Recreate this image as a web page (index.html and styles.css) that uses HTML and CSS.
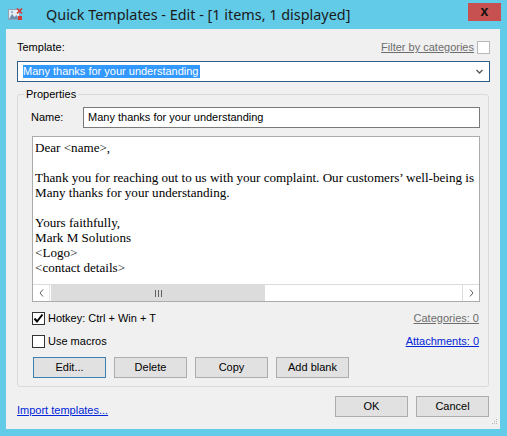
FILE: index.html
```html
<!DOCTYPE html>
<html>
<head>
<meta charset="utf-8">
<link rel="stylesheet" href="styles.css">
</head>
<body>
<div class="window">
  <div class="titlebar">
    <svg class="app-icon" width="15" height="13" viewBox="0 0 15 13">
      <rect x="0.5" y="1.5" width="11" height="10" fill="#e8eef4" stroke="#8fa3b8"/>
      <path d="M1 11 L4 6 L6.5 9 L8.5 7 L11 11 Z" fill="#6f8fb0"/>
      <circle cx="4" cy="4" r="1.3" fill="#9fb7cf"/>
      <path d="M9 0.5 L14 5.5 M14 0.5 L9 5.5" stroke="#d23a3a" stroke-width="1.6"/>
      <rect x="10" y="8" width="4" height="4" fill="#d23a3a"/>
    </svg>
    <span class="title">Quick Templates - Edit - [1 items, 1 displayed]</span>
    <div class="close">x</div>
  </div>
  <div class="client">
    <div class="top-row">
      <span>Template:</span>
      <span class="filter"><span class="link-gray">Filter by categories</span><span class="cb cb-light"></span></span>
    </div>
    <div class="combo">
      <span class="sel">Many thanks for your understanding</span>
      <svg class="combo-arrow" width="7" height="5" viewBox="0 0 7 5"><path d="M0.5 1 L3.5 4 L6.5 1" fill="none" stroke="#5a5a5a" stroke-width="1.4"/></svg>
    </div>
    <fieldset class="group">
      <legend>Properties</legend>
      <div class="name-row">
        <span class="name-label">Name:</span>
        <div class="input">Many thanks for your understanding</div>
      </div>
      <div class="editor">
        <div class="editor-text">Dear &lt;name&gt;,

Thank you for reaching out to us with your complaint. Our customers’ well-being is
Many thanks for your understanding.

Yours faithfully,
Mark M Solutions
&lt;Logo&gt;
&lt;contact details&gt;</div>
        <div class="sb">
          <div class="sb-btn sb-left"><svg width="5" height="8" viewBox="0 0 5 8"><path d="M4 0.5 L1 4 L4 7.5" fill="none" stroke="#606060" stroke-width="1"/></svg></div>
          <div class="sb-thumb"><svg width="7" height="7" viewBox="0 0 7 7"><path d="M0.5 0 V7 M3.5 0 V7 M6.5 0 V7" stroke="#606060" stroke-width="1"/></svg></div>
          <div class="sb-track"></div>
          <div class="sb-btn sb-right"><svg width="5" height="8" viewBox="0 0 5 8"><path d="M1 0.5 L4 4 L1 7.5" fill="none" stroke="#606060" stroke-width="1"/></svg></div>
        </div>
      </div>
      <div class="opt-row">
        <span class="check"><span class="cb cb-checked"><svg width="11" height="11" viewBox="0 0 11 11"><path d="M1.5 5.5 L4 8.5 L9.5 1.5" fill="none" stroke="#000" stroke-width="2"/></svg></span>Hotkey: Ctrl + Win + T</span>
        <span class="link-gray">Categories: 0</span>
      </div>
      <div class="opt-row">
        <span class="check"><span class="cb"></span>Use macros</span>
        <span class="link-blue">Attachments: 0</span>
      </div>
      <div class="btn-row">
        <button class="btn btn-default">Edit...</button>
        <button class="btn">Delete</button>
        <button class="btn">Copy</button>
        <button class="btn">Add blank</button>
      </div>
    </fieldset>
    <div class="footer">
      <span class="link-blue">Import templates...</span>
      <div class="footer-btns">
        <button class="btn">OK</button>
        <button class="btn">Cancel</button>
      </div>
    </div>
    <svg class="grip" width="6" height="7" viewBox="0 0 6 7">
      <rect x="4" y="0" width="1" height="1" fill="#b5b5b5"/>
      <rect x="2" y="2" width="1" height="1" fill="#b5b5b5"/>
      <rect x="4" y="2" width="1" height="1" fill="#b5b5b5"/>
      <rect x="0" y="4" width="1" height="1" fill="#b5b5b5"/>
      <rect x="2" y="4" width="1" height="1" fill="#b5b5b5"/>
      <rect x="4" y="4" width="1" height="1" fill="#b5b5b5"/>
    </svg>
  </div>
</div>
</body>
</html>
```

FILE: styles.css
```css
* { box-sizing: border-box; }
html, body { margin: 0; padding: 0; }
body { width: 507px; height: 436px; overflow: hidden; }

.window {
  width: 507px;
  height: 436px;
  background: #62cbe8;
  display: flex;
  flex-direction: column;
}

.titlebar {
  height: 29px;
  display: flex;
  align-items: flex-start;
  flex: none;
}
.app-icon { margin: 8px 0 0 8px; flex: none; }
.title {
  margin: 5px 0 0 23px;
  font: 14.4px/20px "Noto Sans", sans-serif;
  color: #1a1a1a;
  white-space: nowrap;
}
.close {
  margin: 3px 6px 0 auto;
  width: 33px;
  height: 18px;
  background: #c75050;
  color: #111;
  font: bold 14px/16px "Liberation Sans", sans-serif;
  text-align: center;
}

.client {
  flex: 1;
  margin: 0 7px 7px 6px;
  background: #f0f0f0;
  padding: 0 10px 0 11px;
  position: relative;
  font: 11px/13px "Liberation Sans", Arial, sans-serif;
  color: #000;
}

.top-row {
  margin-top: 12px;
  height: 13px;
  display: flex;
  justify-content: space-between;
  align-items: center;
}
.filter { display: flex; align-items: center; gap: 3px; }

.link-gray { color: #6d6d6d; text-decoration: underline; }
.link-blue { color: #0026d9; text-decoration: underline; }

.cb {
  width: 13px;
  height: 13px;
  border: 1px solid #333;
  background: #fff;
  display: inline-flex;
  align-items: center;
  justify-content: center;
  flex: none;
}
.cb-light { border-color: #b9b9b9; }

.combo {
  margin-top: 7px;
  height: 21px;
  border: 1px solid #2f5d8a;
  background: #fff;
  display: flex;
  align-items: center;
  padding: 0 6px 0 5px;
}
.sel { background: #3399ff; color: #fff; line-height: 13px; padding: 0 1px 0 0; }
.combo-arrow { margin-left: auto; }

.group {
  margin: 6px 1px 0 0;
  padding: 6px 8px 8px 14px;
  border: 1px solid #d9d9d9;
  border-radius: 3px;
  min-width: 0;
}
.group legend {
  padding: 0 2px;
  margin-left: -8px;
  line-height: 13px;
}

.name-row { display: flex; align-items: center; height: 21px; }
.name-label { width: 51px; margin-left: -1px; flex: none; }
.input {
  flex: 1;
  height: 21px;
  border: 1px solid #7a7a7a;
  background: #fff;
  padding: 3px 4px;
  line-height: 13px;
  margin-left: 1px;
}

.editor {
  margin-top: 8px;
  height: 166px;
  border: 1px solid #ababab;
  background: #fff;
  display: flex;
  flex-direction: column;
}
.editor-text {
  flex: 1;
  overflow: hidden;
  white-space: pre;
  font: 13.1px/15px "Liberation Serif", "Times New Roman", serif;
  padding: 2.5px 0 0 2px;
}
.sb {
  height: 17px;
  flex: none;
  display: flex;
  border-top: 1px solid #dcdcdc;
  background: #fff;
}
.sb-btn {
  width: 17px;
  display: flex;
  align-items: center;
  justify-content: center;
  flex: none;
}
.sb-left { border-right: 1px solid #e6e6e6; }
.sb-right { border-left: 1px solid #dcdcdc; }
.sb-thumb {
  width: 214px;
  margin: 0 0 0 1px;
  background: #dcdcdc;
  display: flex;
  align-items: center;
  justify-content: center;
  flex: none;
}
.sb-track { flex: 1; }

.opt-row {
  margin-top: 9px;
  height: 14px;
  display: flex;
  align-items: center;
  justify-content: space-between;
  padding-right: 1px;
}
.check { display: flex; align-items: center; gap: 3px; }

.btn-row { margin-top: 9px; display: flex; gap: 8px; padding-left: 1px; }
.btn {
  width: 73px;
  height: 21px;
  background: #e1e1e1;
  border: 1px solid #adadad;
  font: 11px/13px "Liberation Sans", Arial, sans-serif;
  color: #000;
  padding: 0;
  margin: 0;
}
.btn-default { border-color: #3c7fb1; }

.footer {
  margin-top: 9px;
  display: flex;
  justify-content: space-between;
  align-items: flex-end;
}
.footer-btns { display: flex; gap: 8px; margin-right: 1px; }

.grip { position: absolute; right: 2px; bottom: 3px; }
```
